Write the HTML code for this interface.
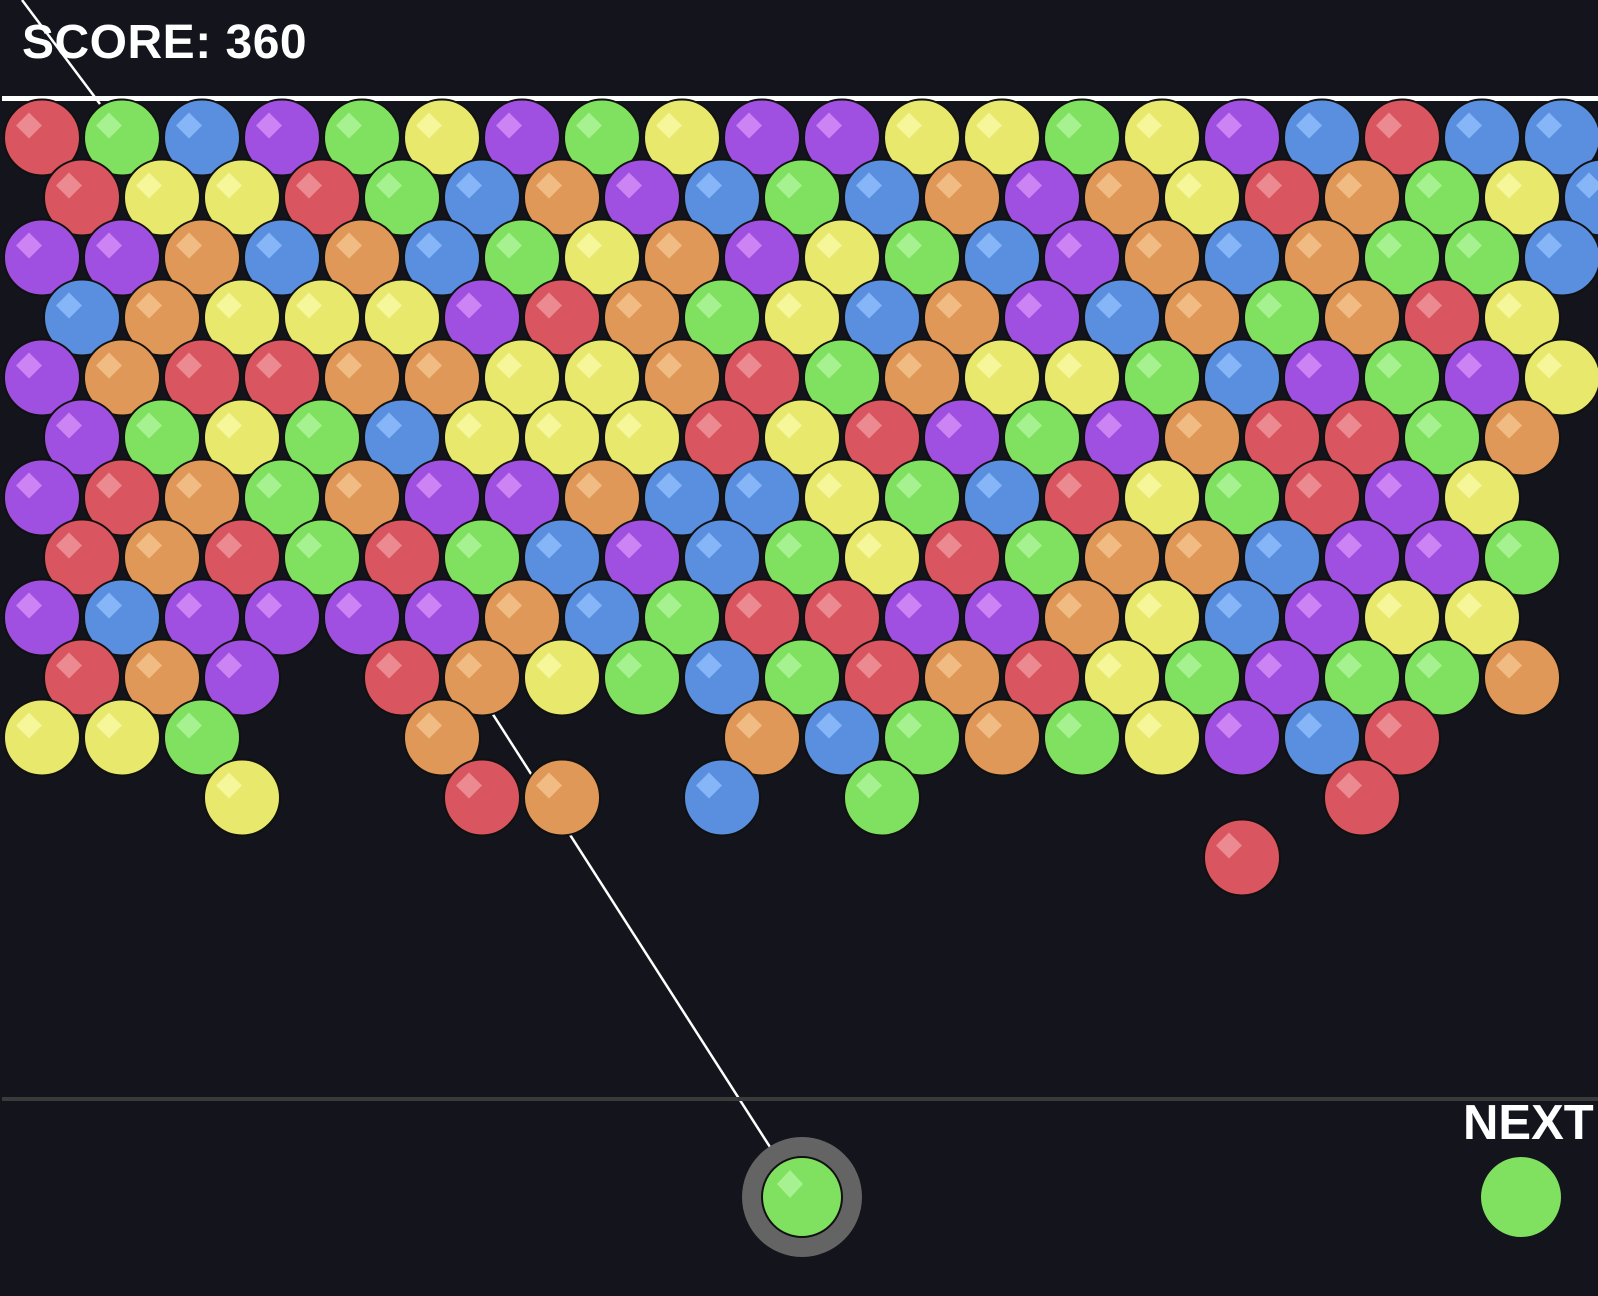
<!DOCTYPE html>
<html><head><meta charset="utf-8"><style>
html,body{margin:0;padding:0;background:#13141c;overflow:hidden}
svg{display:block}
text{font-family:"Liberation Sans",sans-serif;font-weight:bold;fill:#fff}
</style></head><body>
<svg id="s" width="1598" height="1296" viewBox="0 0 1598 1296">
<rect width="1598" height="1296" fill="#13141c"/>
<line x1="22" y1="0" x2="100" y2="104" stroke="#fff" stroke-width="2.5"/>
<line x1="770" y1="1147" x2="330" y2="460" stroke="#fff" stroke-width="2.5"/>
<rect x="2" y="96" width="1596" height="5" fill="#fff"/>
<rect x="2" y="1097" width="1596" height="4" fill="#3a3a3a"/>
<g id="b"></g>
<text x="22" y="58" font-size="48" letter-spacing="0.5">SCORE: 360</text>
<text x="1463" y="1139" font-size="49">NEXT</text>
<circle cx="802" cy="1197" r="60" fill="#646464"/>
<circle cx="802" cy="1197" r="40" fill="#80e060" stroke="#111" stroke-width="2"/>
<polygon points="790,1170 803,1184 790,1198 777,1184" fill="#a6f290"/>
<circle cx="1521" cy="1197" r="40" fill="#80e060"/>
</svg>
<script>
var C={r:["#d9555f","#ec8a92"],g:["#80e060","#a6f290"],b:["#5a8fe0","#86b6f8"],p:["#a050e0","#cc84f4"],y:["#e8e86c","#f6f69a"],o:["#e09858","#f0bc84"]};
var rows=[
"rgbpgypgyppyygypbrbb",
"ryyrgbopbgbopoyrogyb",
"ppobobgyopygbpoboggb",
"boyyyprogybopbogory",
"porrooyyorgoyygbpgpy",
"pgygbyyyryrpgporrgo",
"progoppobbygbrygrpy",
"rorgrgbpbgyrgoobppg",
"pbppppobgrrppoybpyy",
"rop.roygbgrorygpggo",
"yyg..o...obgogypbr",
"..y..ro.b.g.....r",
"...............r"
];
var g=document.getElementById("b"),h="";
for(var i=0;i<rows.length;i++){var row=rows[i];var x0=i%2?82:42;var y=137.5+i*60;
for(var j=0;j<row.length;j++){var c=row[j];if(!C[c])continue;var x=x0+j*80;
h+='<circle cx="'+x+'" cy="'+y+'" r="38" fill="'+C[c][0]+'" stroke="#111" stroke-width="2"/>';
var hx=x-13,hy=y-12;
h+='<polygon points="'+hx+','+(hy-13)+' '+(hx+13)+','+hy+' '+hx+','+(hy+13)+' '+(hx-13)+','+hy+'" fill="'+C[c][1]+'"/>';}}
g.innerHTML=h;
</script>
</body></html>
